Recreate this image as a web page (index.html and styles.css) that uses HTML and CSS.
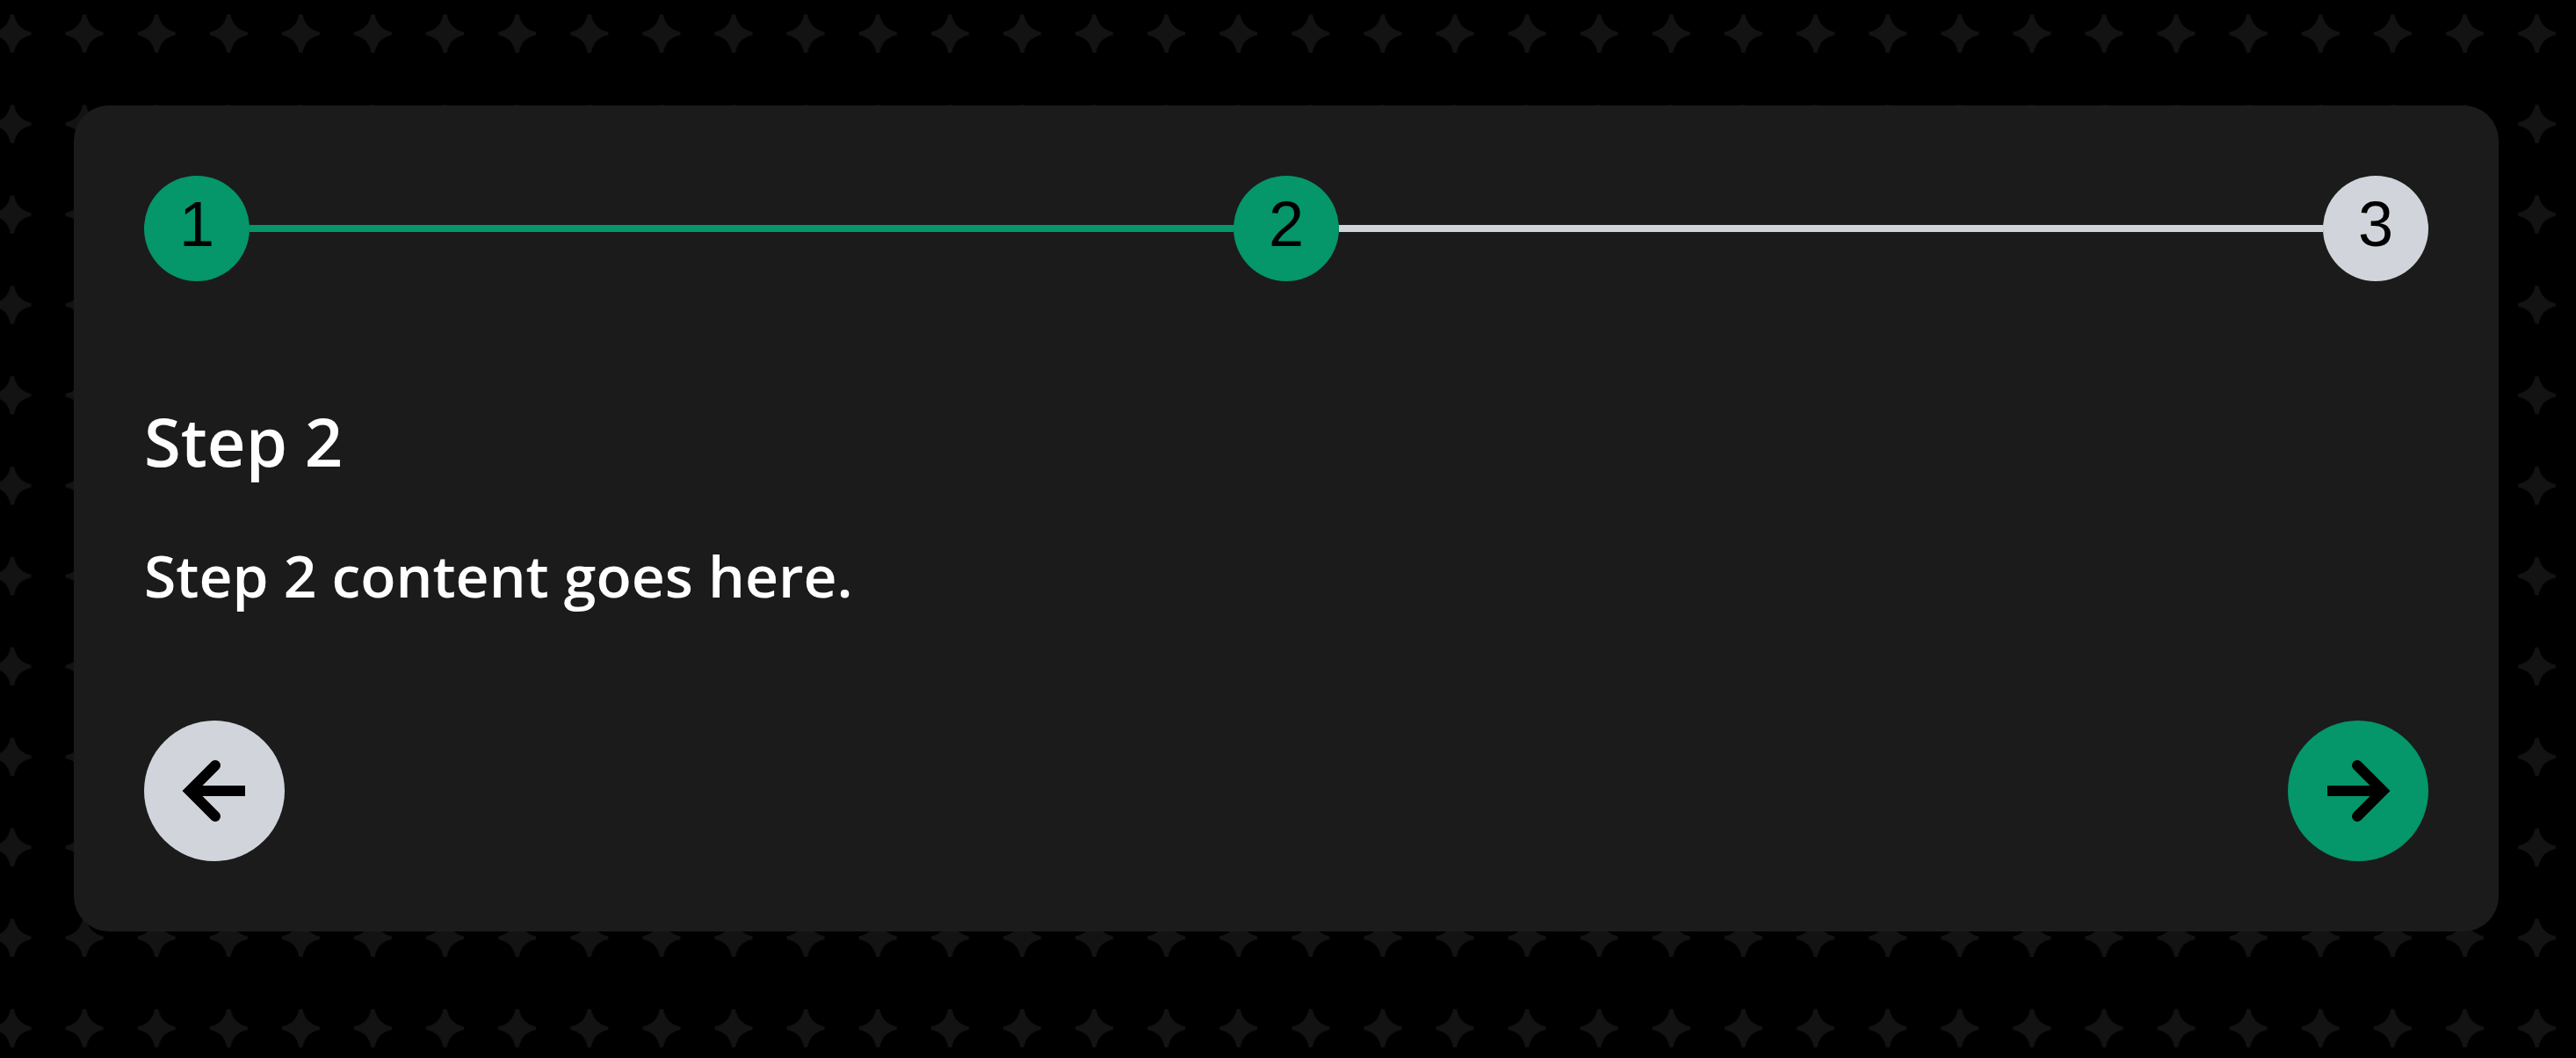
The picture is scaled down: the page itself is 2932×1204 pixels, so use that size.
FILE: index.html
```html
<!DOCTYPE html>
<html lang="en">
<head>
  <meta charset="utf-8">
  <meta name="viewport" content="width=device-width, initial-scale=1">
  <title>Step 2</title>
  <link rel="stylesheet" href="styles.css">
</head>
<body>
  <main class="page">
    <section class="card">
      <ol class="stepper">
        <li class="step step-done">1</li>
        <li class="line line-done" role="presentation"></li>
        <li class="step step-done" aria-current="step">2</li>
        <li class="line" role="presentation"></li>
        <li class="step">3</li>
      </ol>
      <div class="content">
        <h2 class="title">Step 2</h2>
        <p class="text">Step 2 content goes here.</p>
      </div>
      <div class="actions">
        <button class="nav-button" type="button" aria-label="Previous step">
          <svg class="icon" viewBox="0 0 96 96" aria-hidden="true">
            <path d="M49 19 20 48l29 29"/>
            <path class="shaft" d="M20 48h63"/>
          </svg>
        </button>
        <button class="nav-button nav-next" type="button" aria-label="Next step">
          <svg class="icon" viewBox="0 0 96 96" aria-hidden="true">
            <path d="M47 19l29 29-29 29"/>
            <path class="shaft" d="M76 48H13"/>
          </svg>
        </button>
      </div>
    </section>
  </main>
</body>
</html>
```

FILE: styles.css
```css
:root {
  --green: #059669;
  --gray: #d1d5db;
  --surface: #1b1b1b;
}

* {
  box-sizing: border-box;
}

body {
  margin: 0;
  min-height: 100vh;
  background-color: #000;
  /* ten by ten stars per tile */
  background-image: url("data:image/svg+xml,%3Csvg xmlns='http://www.w3.org/2000/svg' width='821' height='1029' viewBox='0 0 8210 10290'%3E%3Cdefs%3E%3Cpattern id='s' width='821' height='1029' patternUnits='userSpaceOnUse'%3E%3Cpath fill='%23131313' d='M390 295H430Q460 460 625 495V530Q460 560 430 730H390Q360 560 195 530V495Q360 460 390 295Z'/%3E%3C/pattern%3E%3C/defs%3E%3Crect width='8210' height='10290' fill='url(%23s)'/%3E%3C/svg%3E");
  background-position: -27px -13px;
  color: #fff;
  font-family: "Open Sans", "Noto Sans", sans-serif;
}

.page {
  padding: 120px 88px 144px 84px;
}

.card {
  padding: 80px;
  border-radius: 40px;
  background: var(--surface);
}

.stepper {
  display: flex;
  align-items: center;
  margin: 0;
  padding: 0;
  list-style: none;
}

.step {
  display: flex;
  flex: none;
  align-items: center;
  justify-content: center;
  width: 120px;
  height: 120px;
  padding-bottom: 10px;
  border-radius: 50%;
  background: var(--gray);
  color: #000;
  font-family: "Liberation Sans", Arial, sans-serif;
  font-size: 72px;
  line-height: 80px;
}

.line {
  flex: 1;
  height: 8px;
  background: var(--gray);
}

.step-done,
.line-done {
  background: var(--green);
}

.content {
  display: flex;
  flex-direction: column;
  gap: 40px;
  padding: 126px 0 110px;
}

.title,
.text {
  margin: 0;
  font-weight: 600;
  line-height: 112px;
}

.title {
  font-size: 76px;
}

.text {
  font-size: 66px;
}

.actions {
  display: flex;
  justify-content: space-between;
}

.nav-button {
  display: flex;
  align-items: center;
  justify-content: center;
  width: 160px;
  height: 160px;
  padding: 0;
  border: 0;
  border-radius: 50%;
  background: var(--gray);
  color: #000;
  cursor: pointer;
}

.nav-next {
  background: var(--green);
}

.icon {
  width: 96px;
  height: 96px;
  fill: none;
  stroke: currentColor;
  stroke-width: 12;
  stroke-linecap: round;
  stroke-linejoin: miter;
}

.shaft {
  stroke-linecap: butt;
}
```
